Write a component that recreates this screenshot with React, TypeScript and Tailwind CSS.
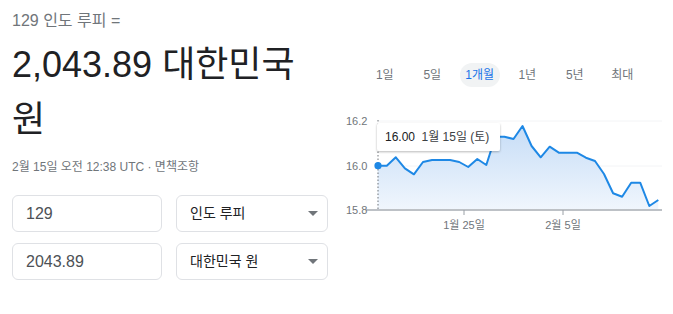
import React from "react";

const Z = [197,197,172,205,223,186,180,180,180,186,201,177,195,110,110,117,78,138,172,140,158,158,158,173,183,222,280,290,248,248,318,300];
const PTS = Z.map((z, i) => [377.7 + 9.053 * i, 100 + z / 3]);
const linePath = PTS.map((p, i) => `${i === 0 ? "M" : "L"}${p[0].toFixed(1)},${p[1].toFixed(1)}`).join(" ");
const last = PTS[PTS.length - 1];
const areaPath = `${linePath} L${last[0].toFixed(1)},210 L${PTS[0][0].toFixed(1)},210 Z`;

const tabs = [
  { label: "1일", active: false },
  { label: "5일", active: false },
  { label: "1개월", active: true },
  { label: "1년", active: false },
  { label: "5년", active: false },
  { label: "최대", active: false },
];

function Arrow() {
  return (
    <svg width="10" height="5" viewBox="0 0 10 5" className="shrink-0">
      <polygon points="0,0 10,0 5,5" fill="#70757a" />
    </svg>
  );
}

export default function App() {
  const font = { fontFamily: '"Liberation Sans", Arial, "Noto Sans CJK KR", sans-serif' };
  return (
    <div className="w-[673px] h-[314px] bg-white flex overflow-hidden" style={font}>
      <div className="w-[340px] shrink-0 pl-3 pt-[11px]">
        <div className="text-[16px] leading-[20px] text-[#70757a]">129 인도 루피 =</div>
        <div className="mt-[6px] w-[320px] text-[36px] leading-[55px] text-[#202124]">2,043.89 대한민국 원</div>
        <div className="mt-[12px] text-[12px] leading-[16px] text-[#70757a]">2월 15일 오전 12:38 UTC · 면책조항</div>
        <div className="mt-[20px] grid grid-cols-[150px_152px] grid-rows-[37px_37px] gap-x-[14px] gap-y-[11px]">
          <div className="border border-[#dfe1e5] rounded-[6px] flex items-center pl-[13px] text-[16px] text-[#4d5156]">129</div>
          <div className="border border-[#dfe1e5] rounded-[6px] flex items-center justify-between pl-[13px] pr-[9px] text-[14px] text-[#202124]">
            <span>인도 루피</span>
            <Arrow />
          </div>
          <div className="border border-[#dfe1e5] rounded-[6px] flex items-center pl-[13px] text-[16px] text-[#4d5156]">2043.89</div>
          <div className="border border-[#dfe1e5] rounded-[6px] flex items-center justify-between pl-[13px] pr-[9px] text-[14px] text-[#202124]">
            <span>대한민국 원</span>
            <Arrow />
          </div>
        </div>
      </div>
      <div className="flex-1 pt-[63px]">
        <div className="flex pl-[21px] h-[24px]">
          {tabs.map((t) => (
            <div key={t.label} className="w-[47.5px] flex items-center justify-center">
              {t.active ? (
                <div className="w-[40px] h-[24px] rounded-full bg-[#f1f3f4] flex items-center justify-center text-[12px] text-[#1a73e8]">
                  {t.label}
                </div>
              ) : (
                <span className="text-[12px] text-[#70757a]">{t.label}</span>
              )}
            </div>
          ))}
        </div>
        <svg width="333" height="151" viewBox="340 87 333 151" className="block">
          <defs>
            <linearGradient id="fillg" x1="0" y1="120" x2="0" y2="210" gradientUnits="userSpaceOnUse">
              <stop offset="0" stopColor="#c3dbf6" />
              <stop offset="1" stopColor="#f0f6fd" />
            </linearGradient>
            <filter id="sh" x="-20%" y="-40%" width="140%" height="200%">
              <feDropShadow dx="0" dy="1" stdDeviation="1.2" floodColor="#000" floodOpacity="0.28" />
            </filter>
          </defs>
          <line x1="378" y1="121" x2="662" y2="121" stroke="#f3f4f6" strokeWidth="1" />
          <line x1="378" y1="166" x2="662" y2="166" stroke="#f3f4f6" strokeWidth="1" />
          <path d={areaPath} fill="url(#fillg)" />
          <line x1="378" y1="120" x2="378" y2="210" stroke="#70757a" strokeWidth="1" strokeDasharray="1.5 2" />
          <path d={linePath} fill="none" stroke="#1e88e5" strokeWidth="2" strokeLinejoin="round" />
          <line x1="366" y1="210" x2="662" y2="210" stroke="#bdc1c6" strokeWidth="2" />
          <line x1="464" y1="210" x2="464" y2="215" stroke="#9aa0a6" strokeWidth="1" />
          <line x1="563" y1="210" x2="563" y2="215" stroke="#9aa0a6" strokeWidth="1" />
          <circle cx="378" cy="165.7" r="3.6" fill="#1e88e5" />
          <g fontSize="11" fill="#70757a">
            <text x="346" y="125">16.2</text>
            <text x="346" y="170">16.0</text>
            <text x="346" y="214">15.8</text>
            <text x="464" y="229" textAnchor="middle">1월 25일</text>
            <text x="563" y="229" textAnchor="middle">2월 5일</text>
          </g>
          <rect x="377" y="123" width="123" height="28" rx="2" fill="#fff" filter="url(#sh)" />
          <text x="385" y="141" fontSize="12" fill="#202124">16.00</text>
          <text x="421.5" y="141" fontSize="12" fill="#3c4043">1월 15일 (토)</text>
        </svg>
      </div>
    </div>
  );
}
